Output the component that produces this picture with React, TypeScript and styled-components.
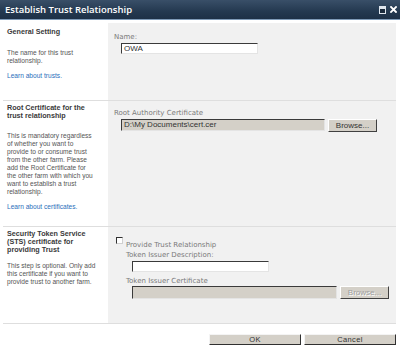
import React from "react";
import styled, { createGlobalStyle } from "styled-components";

const Global = createGlobalStyle`
  html, body { margin: 0; padding: 0; background: #ffffff; }
  body { width: 400px; height: 359px; overflow: hidden; }
`;

const Window = styled.div`
  width: 400px;
  height: 359px;
  background: #ffffff;
  display: flex;
  flex-direction: column;
  overflow: hidden;
`;

const TitleBar = styled.div`
  height: 19px;
  flex: none;
  display: flex;
  align-items: center;
  justify-content: space-between;
  padding: 0 3px 0 5px;
  background: linear-gradient(#394f68, #243950 60%, #1d3046);
  border-bottom: 1px solid #7f9bb8;
`;

const Title = styled.span`
  font-family: "Open Sans", "Liberation Sans", sans-serif;
  font-weight: 600;
  font-size: 9.5px;
  color: #ffffff;
  line-height: 19px;
`;

const TitleIcons = styled.div`
  display: flex;
  align-items: center;
  gap: 4px;
`;

const Body = styled.div`
  margin: 3px 4px 0 3px;
  display: flex;
  flex-direction: column;
`;

const Section = styled.div<{ $h: number }>`
  display: grid;
  grid-template-columns: 105px 1fr;
  height: ${(p) => p.$h}px;
  border-bottom: 1px solid #dedede;
`;

const Side = styled.div<{ $top: number }>`
  padding: ${(p) => p.$top}px 4px 0 4px;
  font-family: "Liberation Sans", Arial, sans-serif;
`;

const Heading = styled.div`
  font-weight: bold;
  font-size: 7.2px;
  line-height: 8px;
  color: #3a3a3a;
`;

const Desc = styled.div<{ $gap: number }>`
  margin-top: ${(p) => p.$gap}px;
  font-size: 6.6px;
  line-height: 8px;
  color: #555555;
`;

const Link = styled.a<{ $gap: number }>`
  display: block;
  margin-top: ${(p) => p.$gap}px;
  font-size: 6.6px;
  line-height: 8px;
  color: #2a6fbb;
  text-decoration: none;
`;

const Main = styled.div<{ $top: number }>`
  background: #f1f1f1;
  padding: ${(p) => p.$top}px 0 0 6px;
  display: flex;
  flex-direction: column;
`;

const Label = styled.div<{ $indent?: number; $gap?: number }>`
  font-family: "DejaVu Sans", Verdana, sans-serif;
  font-size: 7px;
  line-height: 8px;
  color: #7a7a7a;
  margin-left: ${(p) => p.$indent ?? 0}px;
  margin-top: ${(p) => p.$gap ?? 0}px;
`;

const FieldRow = styled.div<{ $indent: number; $gap: number }>`
  display: flex;
  align-items: flex-start;
  gap: 3px;
  margin-left: ${(p) => p.$indent}px;
  margin-top: ${(p) => p.$gap}px;
`;

const TextBox = styled.div<{ $w: number; $h: number; $fill?: string }>`
  box-sizing: border-box;
  width: ${(p) => p.$w}px;
  height: ${(p) => p.$h}px;
  background: ${(p) => p.$fill ?? "#ffffff"};
  border: 1px solid;
  border-color: #3a3a3a #e4e4e4 #e4e4e4 #3a3a3a;
  font-family: "Liberation Sans", Arial, sans-serif;
  font-size: 8px;
  line-height: ${(p) => p.$h - 2}px;
  color: #333333;
  padding-left: 2px;
  white-space: nowrap;
  overflow: hidden;
`;

const Button = styled.div<{ $w: number; $h: number; $disabled?: boolean }>`
  box-sizing: border-box;
  width: ${(p) => p.$w}px;
  height: ${(p) => p.$h}px;
  background: #d4d0c8;
  border: 1px solid;
  border-color: #ffffff #404040 #404040 #ffffff;
  font-family: "Liberation Sans", Arial, sans-serif;
  font-size: 8px;
  line-height: ${(p) => p.$h - 2}px;
  text-align: center;
  color: ${(p) => (p.$disabled ? "#a0a0a0" : "#333333")};
  text-shadow: ${(p) => (p.$disabled ? "1px 1px 0 #ffffff" : "none")};
`;

const CheckRow = styled.div`
  display: flex;
  align-items: flex-start;
  gap: 3px;
  margin-left: 2px;
`;

const CheckBox = styled.span`
  box-sizing: border-box;
  width: 7px;
  height: 7px;
  flex: none;
  background: #ffffff;
  border: 1px solid;
  border-color: #303030 #d0d0d0 #d0d0d0 #303030;
`;

const CheckText = styled.span`
  font-family: "DejaVu Sans", Verdana, sans-serif;
  font-size: 7px;
  line-height: 8px;
  color: #7a7a7a;
  margin-top: 4px;
`;

const Footer = styled.div`
  display: flex;
  justify-content: flex-end;
  gap: 3px;
  padding-top: 10px;
`;

const FootButton = styled.div`
  box-sizing: border-box;
  width: 92px;
  height: 11px;
  background: #d4d0c8;
  border: 1px solid;
  border-color: #f4f4f4 #303030 #303030 #f4f4f4;
  font-family: "Liberation Sans", Arial, sans-serif;
  font-size: 7.5px;
  letter-spacing: 0.4px;
  line-height: 9px;
  text-align: center;
  color: #333333;
`;

const MaxIcon = () => (
  <svg width="7" height="8" viewBox="0 0 7 8">
    <rect x="0.5" y="0.5" width="6" height="7" fill="#1a2a3c" stroke="#dfe6ee" />
    <rect x="1" y="1" width="5" height="2" fill="#dfe6ee" />
  </svg>
);

const CloseIcon = () => (
  <svg width="7" height="7" viewBox="0 0 7 7">
    <path d="M1 1 L6 6 M6 1 L1 6" stroke="#ffffff" strokeWidth="1.8" strokeLinecap="square" />
  </svg>
);

export default function App() {
  return (
    <>
      <Global />
      <Window>
        <TitleBar>
          <Title>Establish Trust Relationship</Title>
          <TitleIcons>
            <MaxIcon />
            <CloseIcon />
          </TitleIcons>
        </TitleBar>
        <Body>
          <Section $h={77}>
            <Side $top={5}>
              <Heading>General Setting</Heading>
              <Desc $gap={13}>
                The name for this trust
                <br />
                relationship.
              </Desc>
              <Link $gap={7} href="#">
                Learn about trusts.
              </Link>
            </Side>
            <Main $top={10}>
              <Label>Name:</Label>
              <FieldRow $indent={7} $gap={2}>
                <TextBox $w={137} $h={11}>OWA</TextBox>
              </FieldRow>
            </Main>
          </Section>
          <Section $h={125}>
            <Side $top={3}>
              <Heading>
                Root Certificate for the
                <br />
                trust relationship
              </Heading>
              <Desc $gap={12}>
                This is mandatory regardless
                <br />
                of whether you want to
                <br />
                provide to or consume trust
                <br />
                from the other farm. Please
                <br />
                add the Root Certificate for
                <br />
                the other farm with which you
                <br />
                want to establish a trust
                <br />
                relationship.
              </Desc>
              <Link $gap={7} href="#">
                Learn about certificates.
              </Link>
            </Side>
            <Main $top={8}>
              <Label>Root Authority Certificate</Label>
              <FieldRow $indent={7} $gap={2}>
                <TextBox $w={204} $h={12} $fill="#d4d0c8">
                  D:\My Documents\cert.cer
                </TextBox>
                <Button $w={49} $h={13}>Browse...</Button>
              </FieldRow>
            </Main>
          </Section>
          <Section $h={96}>
            <Side $top={3}>
              <Heading>
                Security Token Service
                <br />
                (STS) certificate for
                <br />
                providing Trust
              </Heading>
              <Desc $gap={8}>
                This step is optional. Only add
                <br />
                this certificate if you want to
                <br />
                provide trust to another farm.
              </Desc>
            </Side>
            <Main $top={10}>
              <CheckRow>
                <CheckBox />
                <CheckText>Provide Trust Relationship</CheckText>
              </CheckRow>
              <Label $indent={12} $gap={2}>Token Issuer Description:</Label>
              <FieldRow $indent={18} $gap={2}>
                <TextBox $w={137} $h={11} />
              </FieldRow>
              <Label $indent={12} $gap={5}>Token Issuer Certificate</Label>
              <FieldRow $indent={18} $gap={1}>
                <TextBox $w={205} $h={13} $fill="#d4d0c8" />
                <Button $w={49} $h={13} $disabled>
                  Browse...
                </Button>
              </FieldRow>
            </Main>
          </Section>
          <Footer>
            <FootButton>OK</FootButton>
            <FootButton>Cancel</FootButton>
          </Footer>
        </Body>
      </Window>
    </>
  );
}
